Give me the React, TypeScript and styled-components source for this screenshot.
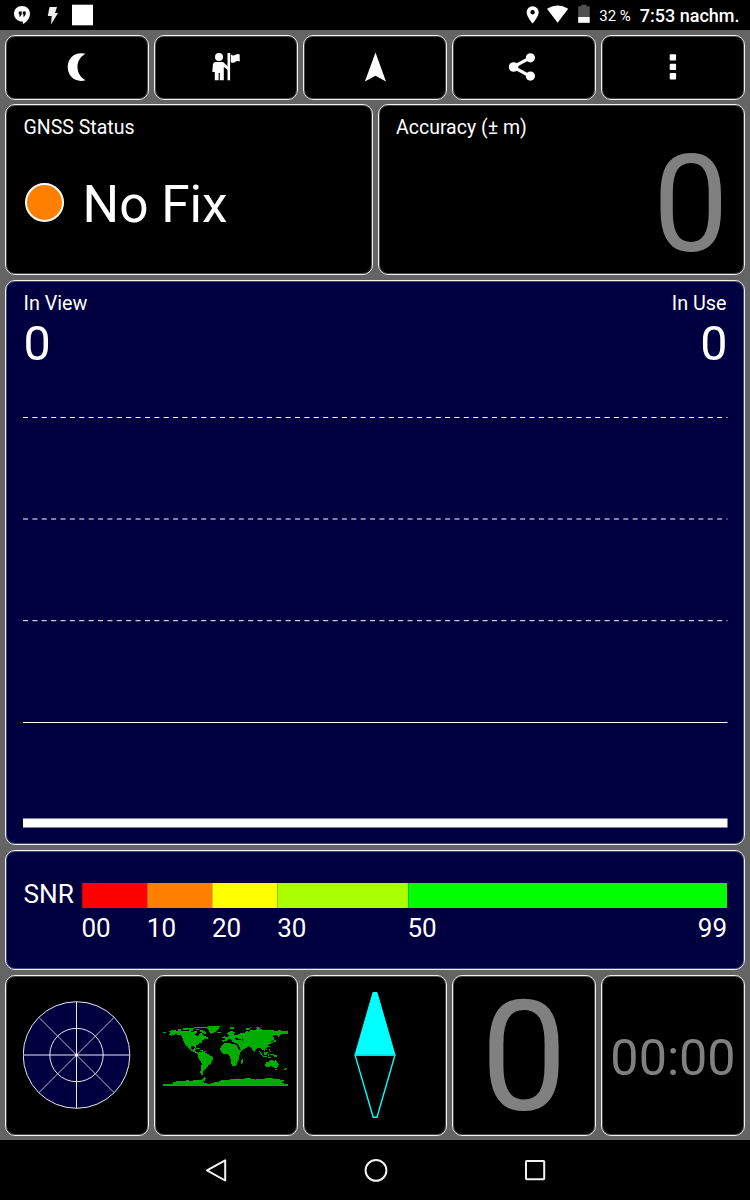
import React from "react";
import styled, { createGlobalStyle } from "styled-components";

const GlobalStyle = createGlobalStyle`
  * { box-sizing: border-box; }
  body { margin: 0; background: #000; }
  svg { display: block; flex: none; }
`;

const Screen = styled.div`
  width: 750px;
  height: 1200px;
  display: flex;
  flex-direction: column;
  background: #000;
  color: #fff;
  font-family: Roboto, sans-serif;
  overflow: hidden;
`;

const StatusBar = styled.header`
  height: 30px;
  display: flex;
  align-items: center;
  justify-content: space-between;
  padding: 0 10.5px 0 14px;
`;

const StatusGroup = styled.div`
  display: flex;
  align-items: center;
`;

const BatteryText = styled.span`
  font-size: 15px;
  line-height: 30px;
  margin: 1px 9px 0 9px;
  white-space: nowrap;
`;

const Clock = styled.span`
  font-size: 18px;
  font-weight: 500;
  line-height: 30px;
  margin-top: 1px;
  white-space: nowrap;
`;

const Board = styled.main`
  height: 1110px;
  padding: 5px 5px 4px;
  display: flex;
  flex-direction: column;
  background: #646464;
`;

const PanelRow = styled.div<{ $height: number; $after?: number }>`
  display: flex;
  height: ${(p) => p.$height}px;
  gap: 5px;
  margin-bottom: ${(p) => p.$after ?? 0}px;
`;

const Panel = styled.section<{ $navy?: boolean }>`
  flex: 1 1 0;
  min-width: 0;
  border: 1px solid #f0f0f0;
  border-radius: 10px;
  background: ${(p) => (p.$navy ? "#000040" : "#000")};
  box-shadow: inset 0 0 0 1px rgba(255, 255, 255, 0.28);
`;

const Tile = styled(Panel)<{ $up?: number }>`
  display: flex;
  align-items: center;
  justify-content: center;
  padding-bottom: ${(p) => p.$up ?? 0}px;
`;

const InfoPanel = styled(Panel)`
  padding: 10.5px 17.5px 0;
`;

const Label = styled.div<{ $size?: number }>`
  font-size: ${(p) => p.$size ?? 19.5}px;
  line-height: 24px;
  white-space: nowrap;
`;

const FixRow = styled.div`
  display: flex;
  align-items: center;
  gap: 20px;
  margin-top: 33px;
  padding-left: 1px;
`;

const FixDot = styled.div`
  width: 39px;
  height: 39px;
  margin-top: -5px;
  border: 2px solid #fff;
  border-radius: 50%;
  background: #ff8000;
`;

const FixText = styled.div`
  font-size: 51.4px;
  line-height: 64px;
  margin-left: -1px;
`;

const BigValue = styled.div<{ $size: number; $line: number; $top?: number; $outdent?: number }>`
  color: #808080;
  font-size: ${(p) => p.$size}px;
  line-height: ${(p) => p.$line}px;
  padding-top: ${(p) => p.$top ?? 0}px;
  margin-right: ${(p) => -(p.$outdent ?? 0)}px;
  text-align: right;
  white-space: nowrap;
`;

const Counts = styled.div`
  display: flex;
  justify-content: space-between;
`;

const Count = styled.div<{ $right?: boolean }>`
  text-align: ${(p) => (p.$right ? "right" : "left")};
`;

const CountValue = styled.div<{ $outdent?: number }>`
  font-size: 48.5px;
  line-height: 55px;
  height: 54px;
  margin-right: ${(p) => -(p.$outdent ?? 0)}px;
`;

const Grid = styled.svg`
  margin: 40.5px 0 0 -0.5px;
`;

const SnrPanel = styled(Panel)`
  display: flex;
  padding: 32px 17px 0 17.5px;
`;

const SnrLabel = styled.div`
  width: 58px;
  font-size: 26.2px;
  line-height: 23px;
`;

const SnrScale = styled.div`
  flex: 1;
  display: flex;
`;

const SnrBand = styled.div<{ $width: number }>`
  flex: ${(p) => p.$width} 1 0;
  min-width: 0;
`;

const BandBar = styled.div<{ $color: string }>`
  height: 25px;
  background: ${(p) => p.$color};
  box-shadow: inset 1px 0 rgba(0, 0, 0, 0.2);
`;

const BandLabels = styled.div`
  display: flex;
  justify-content: space-between;
  padding-top: 5px;
  font-size: 26px;
  line-height: 30px;
`;

const NavBar = styled.nav`
  height: 60px;
  display: flex;
  align-items: center;
  justify-content: center;
  gap: 136px;
  padding-right: 1px;
`;

const MoonIcon = () => (
  <svg width="20" height="30" viewBox="0 0 20 30">
    <path d="M18.5 1.8C8-.7.7 6.2.7 15.1.7 24 8 31 18.5 28.3 7.8 22.6 7.8 7.6 18.5 1.8Z" fill="#fff" />
  </svg>
);

const GuideIcon = () => (
  <svg width="28" height="28" viewBox="0 0 28 28" fill="#fff">
    <circle cx="7" cy="4" r="4" />
    <path d="M3.5 9H10.2Q11.6 9 12.4 10.2L16 13.6V17L11.8 14V27.3H7.8V20H6.6V27.3H2.8V19H.3L.9 11.6Q1.2 9 3.5 9Z" />
    <path d="M15.5 0H18.1V27.3H15.5ZM18.8 1.2Q21 3.3 23.5 1.8 26 .5 27.7 1.5V8.4Q25 7.5 22.8 9.2 20.5 10.6 18.8 8.9Z" />
  </svg>
);

const ArrowIcon = () => (
  <svg width="22" height="30" viewBox="0 0 22 30">
    <path d="M11.5 .6 22 29.4 11.5 23.8.9 29.4Z" fill="#fff" />
  </svg>
);

const ShareIcon = () => (
  <svg width="33" height="28" viewBox="0 0 33 28">
    <path d="M22.5 4.7 5 14 22.5 23.3" fill="none" stroke="#fff" strokeWidth="3.2" />
    <circle cx="22.4" cy="4.8" r="4.6" fill="#fff" />
    <circle cx="5.6" cy="14" r="4.8" fill="#fff" />
    <circle cx="22.4" cy="23.1" r="4.6" fill="#fff" />
  </svg>
);

const MoreIcon = () => (
  <svg width="8" height="28" viewBox="0 0 8 28" fill="#fff">
    <rect x=".7" y="1.2" width="6.4" height="6.4" rx="1" />
    <rect x=".7" y="10.7" width="6.4" height="6.4" rx="1" />
    <rect x=".7" y="20" width="6.4" height="6.4" rx="1" />
  </svg>
);

const NotificationIcons = () => (
  <svg width="80" height="30" viewBox="0 0 80 30">
    <path d="M8 6C3.3 6 0 9.4 0 13.7S3.4 21.5 8.8 21.6V24C13 22 16 18 16 13.7 16 9.4 12.7 6 8 6Z" fill="#fff" />
    <path d="M4.8 11.5H7.7V14.2L6.4 16.5H5L5.9 14.4H4.8ZM8.8 11.5H11.7V14.2L10.4 16.5H9L9.9 14.4H8.8Z" fill="#000" />
    <path d="M35.5 7H43L41 13H44L37 24.5 37.7 16H33.8Z" fill="#f0f0f0" />
    <rect x="58" y="4.7" width="21" height="20.6" fill="#fff" />
  </svg>
);

const SystemIcons = () => (
  <svg width="64" height="30" viewBox="526 0 64 30">
    <path d="M532.6 6.2A5.9 5.9 0 0 0 526.6 12.2C526.6 16.6 532.6 23.6 532.6 23.6S538.7 16.6 538.7 12.2A5.9 5.9 0 0 0 532.6 6.2ZM532.6 14.4A2.2 2.2 0 1 1 532.6 10 2.2 2.2 0 0 1 532.6 14.4Z" fill="#fff" />
    <path d="M547 8.8Q557.6 2.2 568.2 8.8L557.6 22.8Z" fill="#fff" />
    <path d="M578.2 6.2H581.3V4.8H586.5V6.2H589.7V17H578.2Z" fill="#505050" />
    <rect x="578.2" y="17" width="11.5" height="5.8" fill="#fff" />
  </svg>
);

const SkyPlot = () => (
  <svg width="108" height="108" viewBox="-53.5 -54 108 108">
    <g stroke="#e8e8ee" strokeWidth="1" fill="none">
      <circle r="53.3" fill="#000040" />
      <circle r="26.7" />
      <path d="M0-53V53M-53 0H53" />
      <path d="M-37.5-37.5 37.5 37.5M37.5-37.5-37.5 37.5" strokeWidth=".8" />
    </g>
    <circle r="1.5" fill="#fff" />
  </svg>
);

const WorldMap = () => (
  <svg width="125" height="61" viewBox="39 33 375 183" fill="#00ac00" shapeRendering="crispEdges">
    <path d="M57 48 66 45 80 47 98 49 116 48 130 51 138 46 143 51 136 56 137 62 144 65 148 60 149 53 156 54 161 61 168 65 171 72 162 73 154 77 157 82 148 85 139 91 138 99 132 94 122 93 122 101 128 105 134 100 138 102 134 108 143 112 149 116 145 118 134 112 121 106 114 98 106 88 99 77 97 67 90 60 76 58 65 62 56 59 61 55Z" />
    <path d="M39 50H48V54H39ZM83 43H93V47H83ZM99 40H113V46H99ZM114 38H132V41H114ZM117 43H128V48H117ZM133 35H169V39H133ZM137 41H146V45H137ZM148 44 159 46 168 52 166 58 158 53 151 51ZM164 66H174V71H164ZM137 100H149V103H137ZM151 104H160V107H151ZM163 108H167V111H163Z" />
    <path d="M163 37 175 34H209L205 42 201 48 192 52 184 57 178 51 175 42ZM202 50H213V54H202Z" />
    <path d="M148 111 157 109 166 113 174 117 179 122 190 126 190 132 186 137 183 146 176 150 171 157 165 163 160 169 160 177 151 175 152 161 155 149 154 140 147 133 144 126 145 117Z" />
    <path d="M217 89 225 83 237 83 248 87 259 89 263 96 267 104 276 105 270 115 267 123 268 132 263 140 261 148 255 154 247 153 242 139 241 126 235 118 222 117 212 109 211 99Z" />
    <path d="M278 132 281 134 279 142 274 146 274 137Z" />
    <path d="M217 76 225 75 226 69 233 66 240 60 233 59 232 54 244 48 255 52 250 58 259 61 270 55 285 55 289 48 297 51 302 46 317 44 326 38 338 44 351 46 364 46 377 47 389 46 414 49V56H403L392 59 385 65 381 60 374 59 367 63 374 69 371 75 362 79 362 86 356 89 354 96 347 99 345 107 337 106 332 99 323 97 318 104 315 109 308 106 304 97 295 94 291 98 279 104 273 104 267 93 263 86 254 83 247 80 247 74 236 73 229 78 218 81Z" />
    <path d="M222 61 228 66 225 70 220 68ZM217 66H221V69H217ZM240 37H251V41H240ZM289 40 303 37 298 43 289 46ZM318 36H328V40H318ZM352 41H369V43H352ZM372 75H377V80H368V85H363V82H368V78H372ZM355 93H359V97H355ZM347 102H350V106H347ZM312 108H315V112H312Z" />
    <path d="M328 109 334 113 340 124 337 124 329 114ZM341 114 348 109 353 111 351 120 343 120ZM353 116H358V124H354V120H353ZM339 124H352V127H339ZM356 101H360V108H356ZM361 108H364V112H361ZM361 117 368 118 380 120 382 127 374 126 369 121 361 120ZM355 126H363V129H355Z" />
    <path d="M347 142 357 140 361 136 369 136 373 140 377 134 380 140 386 148 382 157 375 160 369 155 362 154 348 157 346 150ZM375 162H380V165H375ZM407 158H411V162H408V166H402V163H405ZM153 177H159V180H153Z" />
    <path d="M39 208H70V201H78V198H102L111 196 125 197 139 195 151 196 159 191 162 186 167 190 165 197 157 201 168 205 178 208 190 203 206 200 216 194 234 194 247 193 264 192 276 193 290 189 306 191 316 194 335 191 358 190 380 191 393 194 403 196 397 203 403 206 414 208V214H39Z" />
    <path d="M256 69H265V72H272V75H257ZM275 68H280V78H277ZM241 78H245V81H241Z" fill="#000" />
  </svg>
);

const MapFrame = styled.div`
  padding-top: 2px;
  margin-right: 1px;
`;

const Compass = () => (
  <svg width="44" height="128" viewBox="0 0 44 128" stroke="#00ffff">
    <path d="M20 1.5H24L42 64H2Z" fill="#00ffff" />
    <path d="M2 64H42L24 126.3H20.2Z" fill="none" strokeWidth="1.4" />
    <path d="M2 64H42" stroke="#00dce4" strokeWidth="1.4" />
  </svg>
);

const BackIcon = () => (
  <svg width="24" height="26" viewBox="0 0 24 26">
    <path d="M2.9 13.3 21.2 3.3V23.5Z" fill="none" stroke="#f2f2f2" strokeWidth="2" strokeLinejoin="round" />
  </svg>
);

const HomeIcon = () => (
  <svg width="24" height="24" viewBox="0 0 24 24">
    <circle cx="12" cy="12.4" r="10.4" fill="none" stroke="#f2f2f2" strokeWidth="2" />
  </svg>
);

const RecentIcon = () => (
  <svg width="22" height="22" viewBox="0 0 22 22">
    <rect x="2" y="2" width="18.2" height="18.2" rx=".6" fill="none" stroke="#f2f2f2" strokeWidth="2" />
  </svg>
);

const toolbar = [MoonIcon, GuideIcon, ArrowIcon, ShareIcon, MoreIcon];

const bands = [
  { from: "00", width: 65.3, color: "#ff0000" },
  { from: "10", width: 65.2, color: "#ff8000" },
  { from: "20", width: 65.2, color: "#ffff00" },
  { from: "30", width: 130.3, color: "#aaff00" },
  { from: "50", to: "99", width: 319.5, color: "#00ff00" },
];

export default function App() {
  return (
    <Screen>
      <GlobalStyle />
      <StatusBar>
        <NotificationIcons />
        <StatusGroup>
          <SystemIcons />
          <BatteryText>32 %</BatteryText>
          <Clock>7:53 nachm.</Clock>
        </StatusGroup>
      </StatusBar>
      <Board>
        <PanelRow $height={65} $after={4}>
          {toolbar.map((Icon, i) => (
            <Tile key={i} $up={1}>
              <Icon />
            </Tile>
          ))}
        </PanelRow>
        <PanelRow $height={171} $after={5}>
          <InfoPanel>
            <Label>GNSS Status</Label>
            <FixRow>
              <FixDot />
              <FixText>No Fix</FixText>
            </FixRow>
          </InfoPanel>
          <InfoPanel>
            <Label>Accuracy (± m)</Label>
            <BigValue $size={134.5} $line={124} $top={3} $outdent={2}>0</BigValue>
          </InfoPanel>
        </PanelRow>
        <PanelRow $height={565} $after={5}>
          <InfoPanel $navy>
            <Counts>
              <Count>
                <Label $size={19.8}>In View</Label>
                <CountValue>0</CountValue>
              </Count>
              <Count $right>
                <Label $size={19.8}>In Use</Label>
                <CountValue $outdent={1}>0</CountValue>
              </Count>
            </Counts>
            <Grid width="705" height="430" viewBox="0 0 705 430" stroke="#fff">
              <path d="M0 7.5H704.5M0 109H704.5M0 210.7H704.5" strokeDasharray="5 4.38" strokeWidth="1" />
              <path d="M0 312.5H704.5" strokeWidth="1" />
              <path d="M0 413H704.5" strokeWidth="9" />
            </Grid>
          </InfoPanel>
        </PanelRow>
        <PanelRow $height={120} $after={5}>
          <SnrPanel $navy>
            <SnrLabel>SNR</SnrLabel>
            <SnrScale>
              {bands.map((b) => (
                <SnrBand key={b.from} $width={b.width}>
                  <BandBar $color={b.color} />
                  <BandLabels>
                    <span>{b.from}</span>
                    {b.to && <span>{b.to}</span>}
                  </BandLabels>
                </SnrBand>
              ))}
            </SnrScale>
          </SnrPanel>
        </PanelRow>
        <PanelRow $height={161}>
          <Tile $up={1}><SkyPlot /></Tile>
          <Tile><MapFrame><WorldMap /></MapFrame></Tile>
          <Tile $up={1}><Compass /></Tile>
          <Tile><BigValue $size={154} $line={154} $top={4}>0</BigValue></Tile>
          <Tile><BigValue $size={50.3} $line={56} $top={4}>00:00</BigValue></Tile>
        </PanelRow>
      </Board>
      <NavBar>
        <BackIcon />
        <HomeIcon />
        <RecentIcon />
      </NavBar>
    </Screen>
  );
}
